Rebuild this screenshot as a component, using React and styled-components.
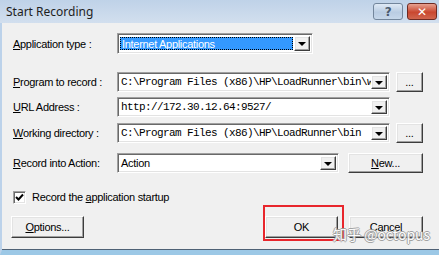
import React from 'react';
import styled, { createGlobalStyle, css } from 'styled-components';

const GlobalStyle = createGlobalStyle`
  html, body {
    margin: 0;
    padding: 0;
    overflow: hidden;
    background: #f0f0f0;
  }
  * {
    box-sizing: border-box;
  }
`;

const raised = css`
  background: #f0f0f0;
  border-top: 1px solid #ffffff;
  border-left: 1px solid #ffffff;
  border-right: 1px solid #3c3c3c;
  border-bottom: 1px solid #3c3c3c;
  box-shadow: inset -1px -1px 0 #a0a0a0, inset 1px 1px 0 #e3e3e3;
`;

const sunken = css`
  background: #ffffff;
  border-top: 1px solid #a0a0a0;
  border-left: 1px solid #a0a0a0;
  border-right: 1px solid #ffffff;
  border-bottom: 1px solid #ffffff;
  box-shadow: inset 1px 1px 0 #696969, inset -1px -1px 0 #e3e3e3;
`;

const Window = styled.div`
  position: relative;
  width: 439px;
  height: 255px;
  display: flex;
  flex-direction: column;
  font-family: 'Liberation Sans', Arial, sans-serif;
  font-size: 11px;
  letter-spacing: -0.3px;
  color: #000;
  overflow: hidden;
`;

const TitleBar = styled.div`
  height: 23px;
  flex: none;
  display: flex;
  align-items: flex-start;
  justify-content: space-between;
  padding: 3px 2px 0 6px;
  background: linear-gradient(#bfd2e8, #d2dfee);
`;

const Title = styled.span`
  font-family: 'Noto Sans', 'Open Sans', sans-serif;
  font-size: 12px;
  letter-spacing: 0;
  line-height: 18px;
  color: #1e1e1e;
`;

const CaptionButtons = styled.div`
  display: flex;
  gap: 4px;
`;

const CaptionButton = styled.div`
  width: 30px;
  height: 17px;
  border-radius: 3px;
  display: flex;
  align-items: center;
  justify-content: center;
  font-family: 'DejaVu Sans', sans-serif;
  font-weight: bold;
  font-size: 12px;
  ${({ $close }) =>
    $close
      ? css`
          background: linear-gradient(#e7a08f, #c9472f 55%, #d0664e);
          border: 1px solid #6e2a22;
          color: #fff;
        `
      : css`
          background: linear-gradient(#dfe9f5, #b9cce2 55%, #c6d7ea);
          border: 1px solid #73869c;
          color: #4a5a6e;
        `}
`;

const Body = styled.div`
  flex: 1;
  display: flex;
  flex-direction: column;
  padding: 10px 16px 0 11px;
  background: #f0f0f0;
  border-left: 2px solid #bcd2ea;
  border-bottom: 5px solid #9cc8e6;
  box-shadow: inset 0 -1px 0 #4f6175;
`;

const Row = styled.div`
  display: flex;
  align-items: center;
  margin-top: ${({ $top }) => $top}px;
  height: ${({ $h }) => $h || 20}px;
`;

const Label = styled.span`
  width: 104px;
  flex: none;
  white-space: nowrap;
`;

const Field = styled.div`
  ${sunken};
  width: ${({ $w }) => $w}px;
  height: 100%;
  display: flex;
  align-items: stretch;
  padding: 2px;
  flex: none;
  overflow: hidden;
`;

const FieldText = styled.div`
  flex: 1;
  min-width: 0;
  overflow: hidden;
  white-space: nowrap;
  display: flex;
  align-items: center;
  padding-left: 1px;
  ${({ $mono }) =>
    $mono &&
    css`
      font-family: 'Liberation Mono', 'Courier New', monospace;
      font-size: 11px;
      letter-spacing: -0.6px;
    `}
`;

const Highlight = styled.div`
  flex: 1;
  margin: 1px 1px 1px 0;
  background: #3399ff;
  color: #fff;
  border: 1px dotted #000;
  display: flex;
  align-items: center;
  padding-left: 1px;
  white-space: nowrap;
  overflow: hidden;
`;

const DropButton = styled.div`
  ${raised};
  width: 16px;
  flex: none;
  display: flex;
  align-items: center;
  justify-content: center;

  &::after {
    content: '';
    border-left: 4px solid transparent;
    border-right: 4px solid transparent;
    border-top: 4px solid #000;
    margin-top: 1px;
  }
`;

const Button = styled.div`
  ${raised};
  width: ${({ $w }) => $w}px;
  height: ${({ $h }) => $h || 20}px;
  flex: none;
  display: flex;
  align-items: center;
  justify-content: center;
  margin-left: ${({ $ml }) => $ml || 0}px;
`;

const CheckRow = styled(Row)`
  gap: 6px;
`;

const CheckBox = styled.div`
  ${sunken};
  width: 13px;
  height: 13px;
  display: flex;
  align-items: center;
  justify-content: center;
`;

const ButtonRow = styled(Row)`
  justify-content: space-between;
  margin-left: -2px;
`;

const ButtonGroup = styled.div`
  display: flex;
  gap: 11px;
`;

const Annotation = styled.div`
  position: absolute;
  left: 263px;
  top: 205px;
  width: 81px;
  height: 36px;
  border: 2px solid #e8262c;
  pointer-events: none;
`;

const Watermark = styled.div`
  position: absolute;
  left: 333px;
  top: 224px;
  font-family: 'Noto Sans CJK SC', 'Noto Sans', sans-serif;
  font-size: 14px;
  letter-spacing: 0;
  color: #ffffff;
  text-shadow: 1px 0 0 #9a9a9a, -1px 0 0 #9a9a9a, 0 1px 0 #9a9a9a, 0 -1px 0 #9a9a9a;
  opacity: 0.9;
  white-space: nowrap;
  pointer-events: none;
`;

const Check = () => (
  <svg width="9" height="9" viewBox="0 0 9 9">
    <path d="M1 4 L3.5 6.5 L8 1.5" stroke="#000" strokeWidth="2" fill="none" />
  </svg>
);

const ComboField = ({ width, mono, children }) => (
  <Field $w={width}>
    <FieldText $mono={mono}>{children}</FieldText>
    <DropButton />
  </Field>
);

const App = () => {
  return (
    <>
      <GlobalStyle />
      <Window>
        <TitleBar>
          <Title>Start Recording</Title>
          <CaptionButtons>
            <CaptionButton>?</CaptionButton>
            <CaptionButton $close>✕</CaptionButton>
          </CaptionButtons>
        </TitleBar>
        <Body>
          <Row $top={0} $h={21}>
            <Label>
              <u>A</u>pplication type :
            </Label>
            <Field $w={196}>
              <Highlight>Internet Applications</Highlight>
              <DropButton />
            </Field>
          </Row>

          <Row $top={18}>
            <Label>
              <u>P</u>rogram to record :
            </Label>
            <ComboField width={273} mono>
              C:\Program Files (x86)\HP\LoadRunner\bin\w
            </ComboField>
            <Button $w={27} $ml={6}>
              ...
            </Button>
          </Row>

          <Row $top={5}>
            <Label>
              <u>U</u>RL Address :
            </Label>
            <ComboField width={273} mono>
              http://172.30.12.64:9527/
            </ComboField>
          </Row>

          <Row $top={6}>
            <Label>
              <u>W</u>orking directory :
            </Label>
            <ComboField width={273} mono>
              C:\Program Files (x86)\HP\LoadRunner\bin
            </ComboField>
            <Button $w={27} $ml={6}>
              ...
            </Button>
          </Row>

          <Row $top={10}>
            <Label>
              <u>R</u>ecord into Action:
            </Label>
            <ComboField width={222}>Action</ComboField>
            <Button $w={75} $ml={9}>
              <u>N</u>ew...
            </Button>
          </Row>

          <CheckRow $top={17} $h={14}>
            <CheckBox>
              <Check />
            </CheckBox>
            <span>
              Record the <u>a</u>pplication startup
            </span>
          </CheckRow>

          <ButtonRow $top={12} $h={22}>
            <Button $w={73} $h={22}>
              <u>O</u>ptions...
            </Button>
            <ButtonGroup>
              <Button $w={73} $h={22}>
                OK
              </Button>
              <Button $w={74} $h={22}>
                Cancel
              </Button>
            </ButtonGroup>
          </ButtonRow>
        </Body>
        <Annotation />
        <Watermark>知乎 @octopus</Watermark>
      </Window>
    </>
  );
};

export default App;
